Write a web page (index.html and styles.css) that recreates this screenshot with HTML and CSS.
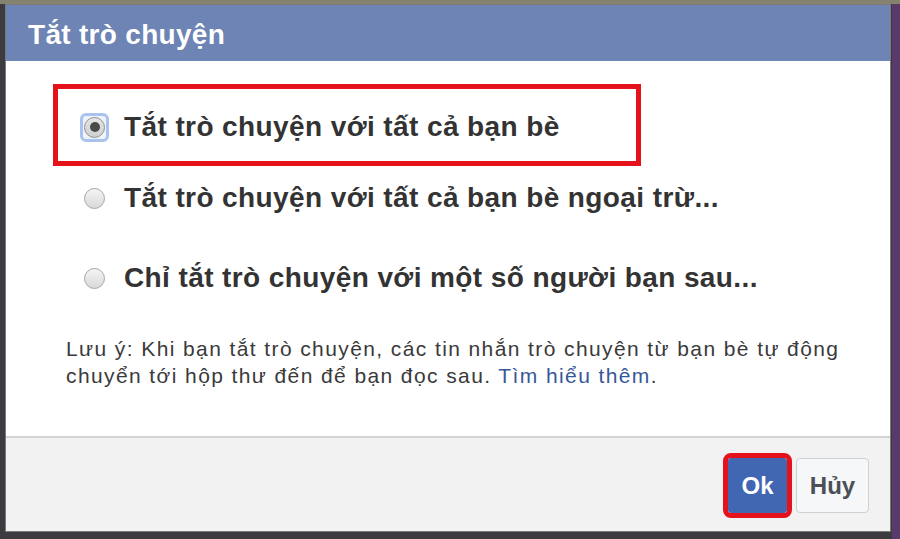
FILE: index.html
```html
<!DOCTYPE html>
<html lang="vi">
<head>
<meta charset="utf-8">
<title>Tắt trò chuyện</title>
<link rel="stylesheet" href="styles.css">
</head>
<body>
<div class="dialog">
  <div class="hdr">Tắt trò chuyện</div>
  <div class="content">
    <div class="opt opt-1">
      <span class="rwrap sel"><span class="radio"><span class="dot"></span></span></span>
      <span class="lbl">Tắt trò chuyện với tất cả bạn bè</span>
    </div>
    <div class="opt opt-2">
      <span class="rwrap"><span class="radio"></span></span>
      <span class="lbl">Tắt trò chuyện với tất cả bạn bè ngoại trừ...</span>
    </div>
    <div class="opt opt-3">
      <span class="rwrap"><span class="radio"></span></span>
      <span class="lbl">Chỉ tắt trò chuyện với một số người bạn sau...</span>
    </div>
    <p class="note">Lưu ý: Khi bạn tắt trò chuyện, các tin nhắn trò chuyện từ bạn bè tự động<br>chuyển tới hộp thư đến để bạn đọc sau. <a class="link" href="#">Tìm hiểu thêm</a>.</p>
  </div>
  <div class="ftr">
    <button class="btn ok">Ok</button>
    <button class="btn cancel">Hủy</button>
  </div>
  <div class="mark"></div>
</div>
</body>
</html>
```
FILE: styles.css
```css
html, body {
  margin: 0;
  padding: 0;
}
body {
  width: 900px;
  height: 539px;
  overflow: hidden;
  background: #3b3b40;
  background-image: linear-gradient(to bottom, #85826f 0, #85826f 4px, transparent 4px),
    linear-gradient(to right, transparent 892px, #5a3a6a 892px);
  font-family: "Liberation Sans", Arial, sans-serif;
}
.dialog {
  position: relative;
  margin: 4px 0 0 5px;
  width: 884px;
  border: 1px solid #7a7a7a;
  background: #fff;
}
.hdr {
  height: 56px;
  box-sizing: border-box;
  padding: 14px 0 0 22px;
  background: #6d84b4;
  color: #fff;
  font-weight: bold;
  font-size: 28px;
  line-height: 32px;
  letter-spacing: 0.3px;
}
.content {
  height: 375px;
  box-sizing: border-box;
  padding-top: 46px;
  background: #fff;
}
.opt {
  display: flex;
  align-items: center;
  height: 40px;
  padding-left: 74px;
}
.opt-2 { margin-top: 31px; }
.opt-3 { margin-top: 40px; }
.rwrap {
  width: 29px;
  height: 29px;
  box-sizing: border-box;
  border: 3px solid transparent;
  border-radius: 6px;
  display: flex;
  align-items: center;
  justify-content: center;
  margin-right: 15px;
}
.rwrap.sel {
  border-color: #a9c2ee;
  background: #eef3fc;
}
.radio {
  width: 21px;
  height: 21px;
  box-sizing: border-box;
  border-radius: 50%;
  border: 1.5px solid #a6a6a6;
  background: linear-gradient(to bottom, #f4f4f4, #d9d9d9);
  display: flex;
  align-items: center;
  justify-content: center;
}
.sel .radio {
  background: linear-gradient(to bottom, #e6e6e6, #cfcfcf);
  border-color: #8f8f8f;
}
.dot {
  width: 10px;
  height: 10px;
  border-radius: 50%;
  background: #4a4a4a;
}
.lbl {
  font-size: 28px;
  font-weight: bold;
  line-height: 40px;
  color: #333;
  letter-spacing: 0.4px;
  white-space: nowrap;
}
.note {
  margin: 37px 0 0 0;
  padding-left: 60px;
  font-size: 21px;
  line-height: 27px;
  color: #3a3a3a;
  letter-spacing: 1.4px;
  white-space: nowrap;
}
.link {
  color: #365899;
  text-decoration: none;
}
.ftr {
  height: 95px;
  box-sizing: border-box;
  border-top: 2px solid #d3d3d3;
  background: #f2f2f2;
  display: flex;
  justify-content: flex-end;
  align-items: flex-start;
  padding: 20px 21px 0 0;
}
.btn {
  height: 55px;
  margin: 0;
  padding: 0;
  font-family: "Liberation Sans", Arial, sans-serif;
  font-weight: bold;
  font-size: 24px;
  border-radius: 3px;
  box-sizing: border-box;
}
.ok {
  width: 59px;
  margin-right: 9px;
  background: #4267b2;
  border: 1px solid #4267b2;
  color: #fff;
  outline: 5px solid #e5121c;
}
.cancel {
  width: 73px;
  background: #f6f7f9;
  border: 1.5px solid #ced0d4;
  color: #4b4f56;
  border-radius: 4px;
}
.mark {
  position: absolute;
  left: 47px;
  top: 79px;
  width: 588px;
  height: 82px;
  box-sizing: border-box;
  border: 5px solid #e5121c;
}
```
